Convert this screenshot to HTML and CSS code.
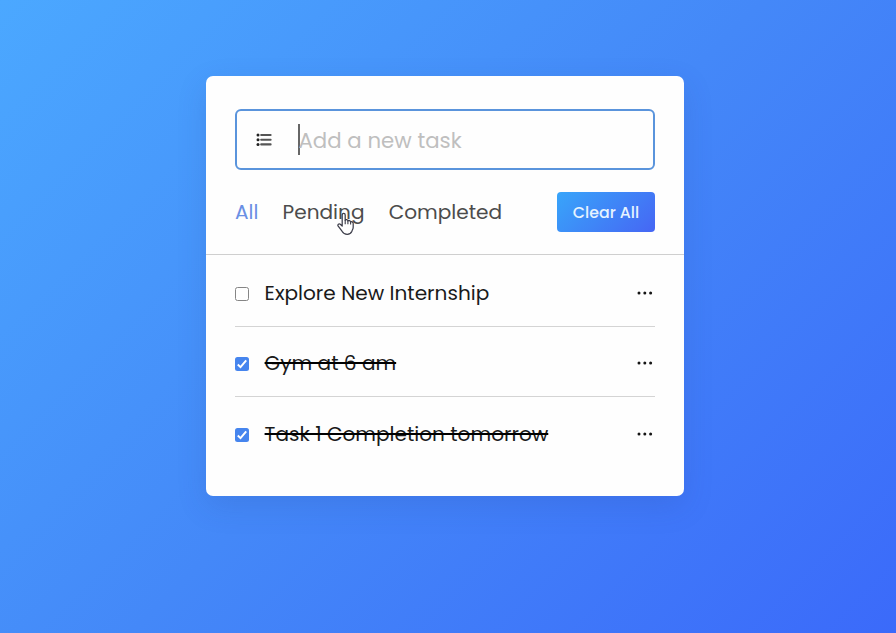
FILE: index.html
```html
<!DOCTYPE html>
<html lang="en">
<head>
<meta charset="utf-8">
<title>Todo List</title>
<link rel="stylesheet" href="styles.css">
</head>
<body>
<main class="card">
  <div class="task-input">
    <svg class="list-icon" width="16" height="14" viewBox="0 0 16 14">
      <g fill="#222"><circle cx="2" cy="2" r="1.5"/><circle cx="2" cy="6.7" r="1.5"/><circle cx="2" cy="11.4" r="1.5"/></g>
      <path d="M5.2 2H14.6M5.2 6.7H14.6M5.2 11.4H14.6" stroke="#555" stroke-width="2.1" stroke-linecap="round"/>
    </svg>
    <span class="caret"></span>
    <span class="placeholder">Add a new task</span>
  </div>
  <div class="controls">
    <nav class="filters">
      <span class="all active">All</span>
      <span class="pending">Pending
        <svg class="pointer" width="18" height="24" viewBox="0 0 18 24">
          <path d="M5.2 14V3.1C5.2 .7 8.2.7 8.2 3.1V8.3C8.8 7.1 10.8 7.4 10.9 9C11.7 8 13.4 8.5 13.6 10C14.6 9.2 16.2 9.9 16.2 11.5V15.2C16.2 17 15.3 18 14.9 19.2C14 21.5 12.6 22.3 10.2 22.3C7.5 22.3 6.3 21.4 5 19.2L1.2 14.2C.2 12.6 2 11.2 3.3 12.2Z" fill="#fff" stroke="#3c3d49" stroke-width="1.25" stroke-linejoin="round"/>
          <path d="M8.2 8V12.2M10.9 9V12.2M13.6 10V12.5" fill="none" stroke="#3c3d49" stroke-width="1.1"/>
        </svg>
      </span>
      <span class="completed">Completed</span>
    </nav>
    <button class="clear">Clear All</button>
  </div>
  <ul class="tasks">
    <li>
      <span class="box"></span><span class="name explore">Explore New Internship</span>
      <svg class="dots" width="16" height="4" viewBox="0 0 16 4"><circle cx="2" cy="2" r="1.5"/><circle cx="7.8" cy="2" r="1.5"/><circle cx="13.6" cy="2" r="1.5"/></svg>
    </li>
    <li>
      <span class="box checked"><svg width="14" height="14" viewBox="0 0 14 14"><path d="M2.8 7.5L5.5 10.1L11.2 3.4"/></svg></span><span class="name done gym">Gym at 6 am</span>
      <svg class="dots" width="16" height="4" viewBox="0 0 16 4"><circle cx="2" cy="2" r="1.5"/><circle cx="7.8" cy="2" r="1.5"/><circle cx="13.6" cy="2" r="1.5"/></svg>
    </li>
    <li>
      <span class="box checked"><svg width="14" height="14" viewBox="0 0 14 14"><path d="M2.8 7.5L5.5 10.1L11.2 3.4"/></svg></span><span class="name done completion">Task 1 Completion tomorrow</span>
      <svg class="dots" width="16" height="4" viewBox="0 0 16 4"><circle cx="2" cy="2" r="1.5"/><circle cx="7.8" cy="2" r="1.5"/><circle cx="13.6" cy="2" r="1.5"/></svg>
    </li>
  </ul>
</main>
</body>
</html>
```
FILE: styles.css
```css
* { box-sizing: border-box; }
body {
  margin: 0;
  height: 633px;
  overflow: hidden;
  padding: 75.5px 0 0 205.5px;
  font-family: Poppins, Inter, sans-serif;
  font-size: 20.08px;
  font-weight: 400;
  background: linear-gradient(135deg, #4ba8ff 0%, #4488f8 50%, #3b6afa 100%);
}
.card {
  width: 478.8px;
  height: 420px;
  padding-top: 33.5px;
  background: #fefefe;
  border-radius: 7px;
  box-shadow: 0 10px 30px rgba(40, 60, 140, .15);
}
.task-input {
  display: flex;
  align-items: center;
  width: 420px;
  height: 61px;
  margin-left: 29.5px;
  padding-left: 19px;
  border: 2px solid #5a94dc;
  border-radius: 6px;
}
.caret { width: 1.5px; height: 31px; margin-left: 26px; background: #666; }
.placeholder { font-size: 21.3px; margin-left: -1px; padding-top: 1px; color: #bfbfbf; white-space: nowrap; }
.controls {
  display: flex;
  align-items: center;
  justify-content: space-between;
  height: 84.6px;
  padding: 0 29.3px 0 29.5px;
  border-bottom: 1px solid #cfcfcf;
}
.filters { display: flex; gap: 24.2px; padding-top: 1px; color: #4c4c4c; }
.filters span { position: relative; white-space: nowrap; }
.filters .active { color: #6a8fe4; }
.pointer { position: absolute; left: 54.5px; top: 14.5px; }
.clear {
  width: 98px;
  height: 40px;
  padding: 1px 0 0;
  border: 0;
  border-radius: 4px;
  font: 500 15.8px Poppins, Inter, sans-serif;
  color: #e6f3ff;
  background: linear-gradient(135deg, #38a5fa, #4666f4);
}
.tasks { list-style: none; margin: 0; padding: 2.4px 29.3px 0 29.5px; }
.tasks li {
  display: flex;
  align-items: center;
  height: 70px;
  padding-top: 3px;
  border-bottom: 1px solid #d4d4d4;
}
.tasks li:last-child { border-bottom: 0; height: 73px; padding-top: 1.4px; }
.box {
  width: 14px;
  height: 14px;
  margin: 2px 15.6px 0 0;
  border: 1px solid #858585;
  border-radius: 2.5px;
}
.box.checked { border: 0; background: #4685ee; }
.box svg { display: block; fill: none; stroke: #fff; stroke-width: 2; }
.name { color: #1a1a1a; white-space: nowrap; }
.done { text-decoration: line-through; text-decoration-thickness: 2px; text-decoration-color: #000; }
.dots { margin-left: auto; margin-right: 2px; fill: #151515; }
```
